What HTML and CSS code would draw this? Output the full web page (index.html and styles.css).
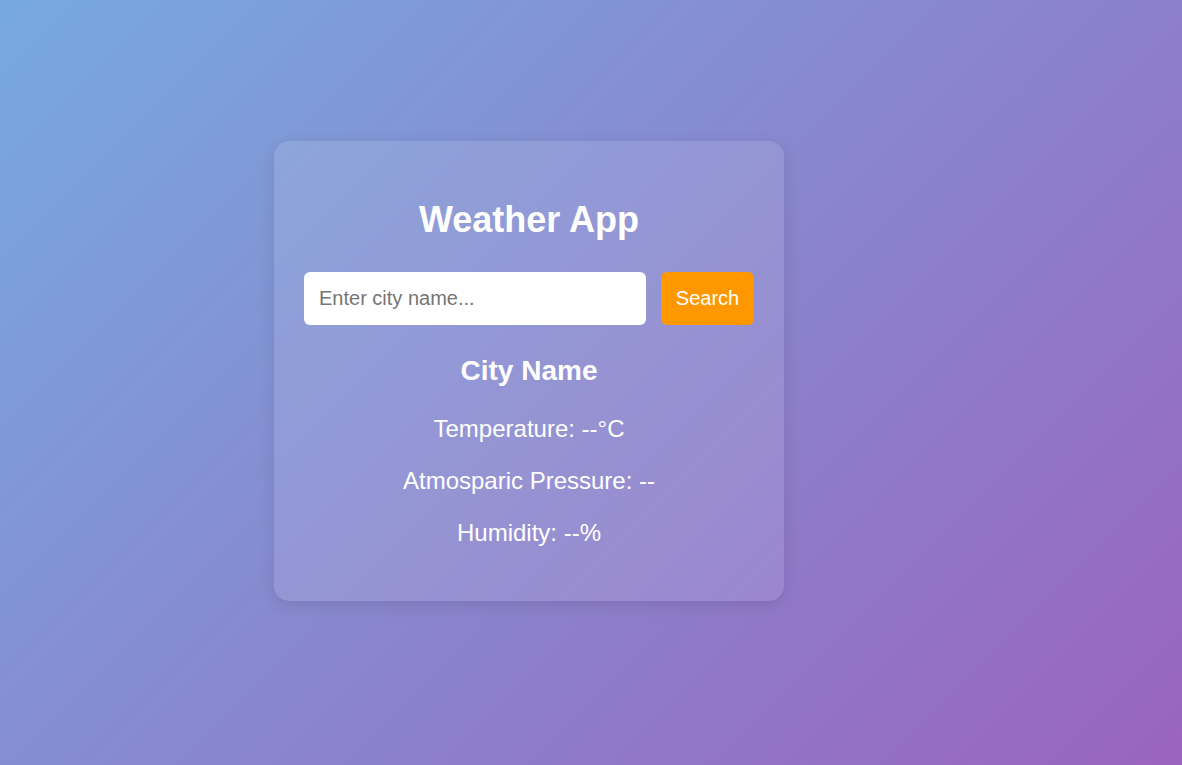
FILE: index.html
```html
<!DOCTYPE html>
<html lang="en">
<head>
<meta charset="UTF-8">
<title>Weather App</title>
<link rel="stylesheet" href="styles.css">
</head>
<body>
<div class="page">
  <div class="card">
    <h1 class="title">Weather App</h1>
    <div class="search">
      <input class="search-input" type="text" placeholder="Enter city name...">
      <button class="search-btn">Search</button>
    </div>
    <h2 class="city">City Name</h2>
    <p class="info first">Temperature: --°C</p>
    <p class="info">Atmosparic Pressure: --</p>
    <p class="info">Humidity: --%</p>
  </div>
</div>
</body>
</html>
```
FILE: styles.css
```css
html, body {
  margin: 0;
  padding: 0;
}
body {
  font-family: "Liberation Sans", Arial, sans-serif;
  font-size: 18px;
  color: #fff;
  min-height: 100vh;
  background: linear-gradient(135deg, #77a9de 0%, #9a64be 100%);
}
.page {
  min-height: 100vh;
  box-sizing: border-box;
  display: flex;
  align-items: flex-start;
  padding: 141px 0 0 274px;
}
.card {
  width: 450px;
  padding: 58px 30px 55px;
  border-radius: 15px;
  background: rgba(255, 255, 255, 0.11);
  box-shadow: 0 4px 15px rgba(0, 0, 0, 0.1);
  text-align: center;
  display: flex;
  flex-direction: column;
}
.title {
  margin: 0;
  font-size: 36px;
  font-weight: bold;
  line-height: 42px;
}
.search {
  display: flex;
  gap: 15px;
  margin-top: 31px;
}
.search-input {
  flex: 1;
  min-width: 0;
  height: 53px;
  box-sizing: border-box;
  padding: 0 15px;
  border: none;
  border-radius: 6px;
  background: #fff;
  font-family: "Liberation Sans", Arial, sans-serif;
  font-size: 20px;
  color: #333;
  outline: none;
}
.search-input::placeholder {
  color: #757575;
}
.search-btn {
  width: 93px;
  height: 53px;
  box-sizing: border-box;
  padding: 0;
  border: none;
  border-radius: 6px;
  background: #ff9800;
  color: #fff;
  font-family: "Liberation Sans", Arial, sans-serif;
  font-size: 20px;
  cursor: pointer;
}
.city {
  margin: 30px 0 0;
  font-size: 28px;
  font-weight: bold;
  line-height: 32px;
}
.info {
  margin: 25px 0 0;
  font-size: 24px;
  line-height: 27px;
}
.info.first {
  margin-top: 28px;
}
```
